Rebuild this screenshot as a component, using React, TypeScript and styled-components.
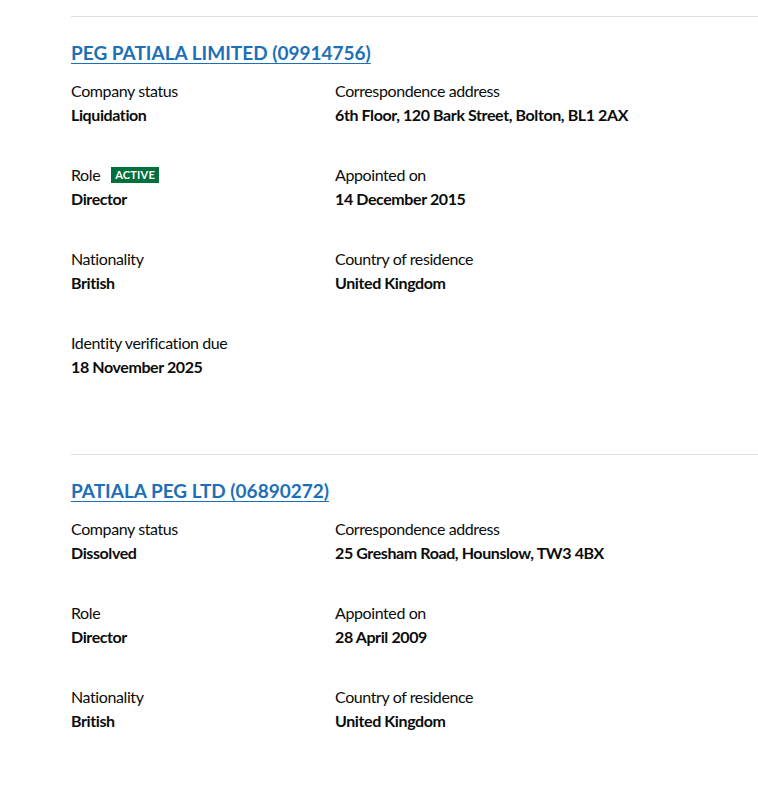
import React from "react"
import styled, { createGlobalStyle } from "styled-components"

const GlobalStyle = createGlobalStyle`
  body {
    margin: 0;
    background: #ffffff;
    font-family: Lato, "Liberation Sans", Arial, sans-serif;
    color: #0b0c0c;
  }
`

const Page = styled.div`
  padding: 16px 0 0 71px;
`

const Appointment = styled.section`
  border-top: 1px solid #e1e1e1;
  padding-top: 23px;
  margin-bottom: 75px;
`

const Heading = styled.h2`
  margin: 0 0 14px 0;
  font-size: 19px;
  line-height: 25px;
  font-weight: 700;
  a {
    color: #1d70b8;
    text-decoration: underline;
    text-decoration-thickness: 1px;
    text-underline-offset: 3px;
  }
`

const Grid = styled.dl`
  margin: 0;
  display: grid;
  grid-template-columns: 264px 1fr;
  row-gap: 36px;
`

const Item = styled.div`
  display: flex;
  flex-direction: column;
`

const Label = styled.dt`
  font-size: 16px;
  line-height: 24px;
  letter-spacing: -0.4px;
  display: flex;
  align-items: center;
  gap: 11px;
`

const Value = styled.dd`
  margin: 0;
  font-size: 16px;
  line-height: 24px;
  letter-spacing: -0.4px;
  font-weight: 700;
`

const Tag = styled.span`
  display: inline-block;
  background: #00703c;
  color: #ffffff;
  font-size: 11px;
  font-weight: 700;
  line-height: 16px;
  padding: 0 4px;
  letter-spacing: 0.2px;
`

type Field = { label: string; value: string; tag?: string }

const appointments: { name: string; fields: Field[] }[] = [
  {
    name: "PEG PATIALA LIMITED (09914756)",
    fields: [
      { label: "Company status", value: "Liquidation" },
      { label: "Correspondence address", value: "6th Floor, 120 Bark Street, Bolton, BL1 2AX" },
      { label: "Role", value: "Director", tag: "ACTIVE" },
      { label: "Appointed on", value: "14 December 2015" },
      { label: "Nationality", value: "British" },
      { label: "Country of residence", value: "United Kingdom" },
      { label: "Identity verification due", value: "18 November 2025" },
    ],
  },
  {
    name: "PATIALA PEG LTD (06890272)",
    fields: [
      { label: "Company status", value: "Dissolved" },
      { label: "Correspondence address", value: "25 Gresham Road, Hounslow, TW3 4BX" },
      { label: "Role", value: "Director" },
      { label: "Appointed on", value: "28 April 2009" },
      { label: "Nationality", value: "British" },
      { label: "Country of residence", value: "United Kingdom" },
    ],
  },
]

export default function App() {
  return (
    <Page>
      <GlobalStyle />
      {appointments.map((a) => (
        <Appointment key={a.name}>
          <Heading>
            <a href="#">{a.name}</a>
          </Heading>
          <Grid>
            {a.fields.map((f) => (
              <Item key={f.label}>
                <Label>
                  {f.label}
                  {f.tag && <Tag>{f.tag}</Tag>}
                </Label>
                <Value>{f.value}</Value>
              </Item>
            ))}
          </Grid>
        </Appointment>
      ))}
    </Page>
  )
}
